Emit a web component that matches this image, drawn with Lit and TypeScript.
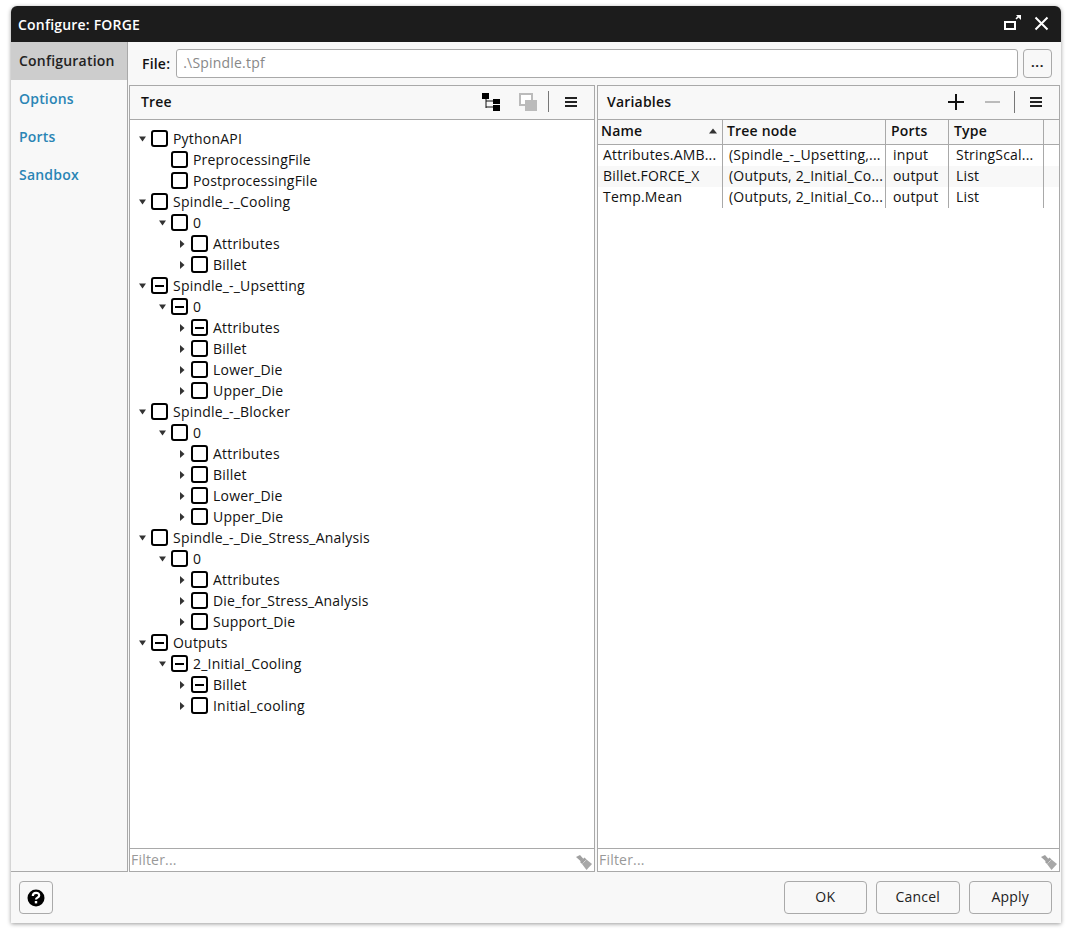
import { LitElement, html, css, svg } from "lit";
import { customElement } from "lit/decorators.js";

type Row = { l: number; t: string; s?: "m"; a?: "d" | "r" };
const rows: Row[] = [
  { l: 0, t: "PythonAPI", a: "d" },
  { l: 1, t: "PreprocessingFile" },
  { l: 1, t: "PostprocessingFile" },
  { l: 0, t: "Spindle_-_Cooling", a: "d" },
  { l: 1, t: "0", a: "d" },
  { l: 2, t: "Attributes", a: "r" },
  { l: 2, t: "Billet", a: "r" },
  { l: 0, t: "Spindle_-_Upsetting", a: "d", s: "m" },
  { l: 1, t: "0", a: "d", s: "m" },
  { l: 2, t: "Attributes", a: "r", s: "m" },
  { l: 2, t: "Billet", a: "r" },
  { l: 2, t: "Lower_Die", a: "r" },
  { l: 2, t: "Upper_Die", a: "r" },
  { l: 0, t: "Spindle_-_Blocker", a: "d" },
  { l: 1, t: "0", a: "d" },
  { l: 2, t: "Attributes", a: "r" },
  { l: 2, t: "Billet", a: "r" },
  { l: 2, t: "Lower_Die", a: "r" },
  { l: 2, t: "Upper_Die", a: "r" },
  { l: 0, t: "Spindle_-_Die_Stress_Analysis", a: "d" },
  { l: 1, t: "0", a: "d" },
  { l: 2, t: "Attributes", a: "r" },
  { l: 2, t: "Die_for_Stress_Analysis", a: "r" },
  { l: 2, t: "Support_Die", a: "r" },
  { l: 0, t: "Outputs", a: "d", s: "m" },
  { l: 1, t: "2_Initial_Cooling", a: "d", s: "m" },
  { l: 2, t: "Billet", a: "r", s: "m" },
  { l: 2, t: "Initial_cooling", a: "r" },
];
const vars = [
  ["Attributes.AMB...", "(Spindle_-_Upsetting,...", "input", "StringScal..."],
  ["Billet.FORCE_X", "(Outputs, 2_Initial_Co...", "output", "List"],
  ["Temp.Mean", "(Outputs, 2_Initial_Co...", "output", "List"],
];

const brush = svg`<svg class="brush" width="18" height="17" viewBox="0 0 18 17"><path d="M1 3 L5 1 L8.5 5 L6 7.5 Z" fill="#a0a0a0"/><path d="M5 8 L9.5 3.5 L11.5 5.5 L7 10 Z" fill="#a0a0a0"/><path d="M7 10 L11.5 5.5 L17 10 L11.5 16 Z" fill="#a8a8a8"/><path d="M8.5 8.5 L10.5 6.5" stroke="#ddd" stroke-width=".8"/></svg>`;

@customElement("app-root")
export class AppRoot extends LitElement {
  static styles = css`
    :host { display: block; width: 1083px; height: 938px; background: #fff; font-family: "Open Sans", sans-serif; font-size: 14px; letter-spacing: 0.2px; color: #111; padding: 6px 0 0 11px; box-sizing: border-box; }
    * { box-sizing: border-box; }
    .dialog { width: 1050px; height: 917px; background: #f8f8f8; border-radius: 6px 6px 0 0; box-shadow: 0 1px 4px rgba(0,0,0,.4); display: flex; flex-direction: column; overflow: hidden; }
    .title { height: 36px; flex: none; background: #1c1c1c; color: #fff; font-weight: 600; font-size: 14px; display: flex; align-items: center; padding: 0 12px 0 7px; }
    .title span { flex: 1; }
    .title svg { display: block; margin-top: -2px; }
    .title .pop { margin-right: 13px; }
    .body { flex: 1; display: flex; min-height: 0; }
    .side { width: 117px; flex: none; border-right: 1px solid #a9a9a9; border-bottom: 1px solid #a9a9a9; font-weight: 600; color: #2a85b5; }
    .side div { height: 38px; line-height: 37px; padding-left: 8px; }
    .side .on { background: #cdcdcd; color: #222; }
    .main { flex: 1; display: flex; flex-direction: column; min-width: 0; padding-left: 1px; }
    .file { height: 43px; flex: none; display: flex; align-items: center; padding: 0 9px 0 13px; }
    .file b { font-weight: 600; margin-right: 6px; }
    .input { flex: 1; height: 29px; border: 1px solid #a9a9a9; border-radius: 3px; background: #fff; color: #888; padding-left: 6px; line-height: 26px; }
    .dots { width: 29px; height: 29px; margin-left: 5px; border: 1px solid #a9a9a9; border-radius: 4px; font-weight: 700; text-align: center; line-height: 25px; font-size: 13px; letter-spacing: 0.6px; color: #222; }
    .panels { flex: 1; display: flex; gap: 2px; min-height: 0; padding-right: 1px; }
    .panel { border: 1px solid #a9a9a9; display: flex; flex-direction: column; min-width: 0; background: #fff; }
    .left { width: 466px; flex: none; }
    .right { flex: 1; }
    .head { height: 34px; flex: none; background: #f8f8f8; border-bottom: 1px solid #a9a9a9; display: flex; align-items: center; font-weight: 600; padding-left: 11px; }
    .right .head { padding-left: 9px; }
    .head .name { flex: 1; padding-bottom: 2px; }
    .head svg { display: block; }
    .sep { width: 1px; height: 21px; background: #777; margin-top: -2px; }
    .right .sep { height: 22px; }
    .tool { margin-top: -2px; }
    .content { flex: 1; min-height: 0; }
    .filter { height: 23px; flex: none; border-top: 1px solid #a9a9a9; color: #999; padding-left: 1px; display: flex; justify-content: space-between; align-items: center; }
    .filter span { line-height: 19px; margin-top: -2px; }
    .brush { margin-right: 1px; margin-top: 4px; }
    .tree { padding-top: 8px; }
    .row { height: 21px; display: flex; align-items: center; white-space: nowrap; }
    .arrow { width: 14px; height: 10px; flex: none; }
    .box { width: 17px; height: 17px; flex: none; border: 2px solid #000; border-radius: 3px; margin-right: 5px; display: flex; align-items: center; justify-content: center; background: #fff; }
    .box i { display: block; width: 9px; height: 2px; background: #000; }
    .l0 { padding-left: 7px; } .l1 { padding-left: 27px; } .l2 { padding-left: 47px; }
    .l1.leaf { padding-left: 41px; }
    .thead, .tr { display: grid; grid-template-columns: 125px 163px 63px 95px 1fr; }
    .thead { height: 25px; background: #f8f8f8; border-bottom: 1px solid #a9a9a9; font-weight: 600; }
    .thead > div { border-right: 1px solid #a9a9a9; padding: 0 5px 2px 4px; line-height: 22px; display: flex; justify-content: space-between; align-items: center; }
    .thead > div:first-child { padding-left: 3px; }
    .thead > div:nth-child(3), .thead > div:nth-child(4) { padding-left: 5px; }
    .thead > div:last-child { border-right: 0; }
    .tr { height: 21px; line-height: 20px; }
    .tr.alt { background: #f8f8f8; }
    .tr > div { border-right: 1px solid #a9a9a9; padding-left: 6px; white-space: nowrap; overflow: hidden; }
    .tr > div:first-child { padding-left: 5px; }
    .tr > div:nth-child(3), .tr > div:nth-child(4) { padding-left: 7px; }
    .tr > div:last-child { border-right: 0; }
    .foot { height: 51px; flex: none; display: flex; align-items: center; padding: 0 9px 0 8px; gap: 9px; }
    .foot .help { width: 34px; height: 33px; margin-right: auto; border: 1px solid #aaa; border-radius: 4px; display: flex; align-items: center; justify-content: center; }
    .foot .btn { width: 83.5px; height: 33px; border: 1px solid #aaa; border-radius: 4px; text-align: center; line-height: 30px; color: #222; }
    .m-a { margin-right: 19px; } .m-b { margin-right: 11px; }
    .m-c { margin-left: 16px; margin-right: 17px; }
    .m-d { margin-right: 21px; } .m-e { margin-right: 14px; }
    .m-f { margin-left: 15px; margin-right: 17px; }
  `;

  private arrow(a?: "d" | "r") {
    if (a === "d") return html`<svg class="arrow" viewBox="0 0 14 10"><path d="M2 2.5h7l-3.5 5z" fill="#333"/></svg>`;
    if (a === "r") return html`<svg class="arrow" viewBox="0 0 14 10"><path d="M3 1l4.5 4L3 9z" fill="#333"/></svg>`;
    return null;
  }

  render() {
    return html`<div class="dialog">
      <div class="title"><span>Configure: FORGE</span>
        <svg class="pop" width="20" height="20" viewBox="0 0 20 20" fill="none" stroke="#fff"><rect x="4" y="9" width="10" height="7" stroke-width="2"/><path d="M15 6l3-3" stroke-width="1.6"/><path d="M15 2h5v5z" fill="#fff" stroke="none"/></svg>
        <svg width="15" height="15" viewBox="0 0 15 15" stroke="#fff" stroke-width="2" fill="none"><path d="M1.5 1.5l12 12M13.5 1.5l-12 12"/></svg>
      </div>
      <div class="body">
        <div class="side">
          <div class="on">Configuration</div><div>Options</div><div>Ports</div><div>Sandbox</div>
        </div>
        <div class="main">
          <div class="file"><b>File:</b><div class="input">.\\Spindle.tpf</div><div class="dots">...</div></div>
          <div class="panels">
            <div class="panel left">
              <div class="head"><span class="name">Tree</span>
                <svg class="tool m-a" width="18" height="18" viewBox="0 0 18 18"><path d="M4 4v11M4 8h8M4 14h8" stroke="#111" fill="none"/><rect x="0" y="0" width="7" height="6" fill="#000"/><rect x="11" y="6" width="7" height="5" fill="#000"/><rect x="11" y="12" width="7" height="6" fill="#000"/></svg>
                <svg class="tool m-b" width="18" height="18" viewBox="0 0 18 18"><rect x="1" y="1" width="12" height="11" fill="#fff" stroke="#bbb" stroke-width="2"/><rect x="6" y="7" width="12" height="11" fill="#bbb"/></svg>
                <div class="sep"></div>
                <svg class="tool m-c" width="12" height="12" viewBox="0 0 12 12"><path d="M0 2h12M0 6h12M0 10h12" stroke="#222" stroke-width="2"/></svg>
              </div>
              <div class="content tree">
                ${rows.map((r) => html`<div class="row l${r.l} ${r.a ? "" : "leaf"}">
                  ${this.arrow(r.a)}
                  <div class="box">${r.s ? html`<i></i>` : null}</div>${r.t}</div>`)}
              </div>
              <div class="filter"><span>Filter...</span>${brush}</div>
            </div>
            <div class="panel right">
              <div class="head"><span class="name">Variables</span>
                <svg class="tool m-d" width="16" height="16" viewBox="0 0 16 16"><path d="M8 0v16M0 8h16" stroke="#111" stroke-width="2"/></svg>
                <svg class="tool m-e" width="15" height="16" viewBox="0 0 15 16"><path d="M0 8h15" stroke="#bbb" stroke-width="2"/></svg>
                <div class="sep"></div>
                <svg class="tool m-f" width="12" height="12" viewBox="0 0 12 12"><path d="M0 2h12M0 6h12M0 10h12" stroke="#222" stroke-width="2"/></svg>
              </div>
              <div class="content">
                <div class="thead">
                  <div>Name <svg width="8" height="6" viewBox="0 0 8 6"><path d="M0 5.5h8L4 .5z" fill="#333"/></svg></div>
                  <div>Tree node</div><div>Ports</div><div>Type</div><div></div>
                </div>
                ${vars.map((v, i) => html`<div class="tr ${i === 1 ? "alt" : ""}">
                  ${v.map((c) => html`<div>${c}</div>`)}<div></div></div>`)}
              </div>
              <div class="filter"><span>Filter...</span>${brush}</div>
            </div>
          </div>
        </div>
      </div>
      <div class="foot">
        <div class="help"><svg width="18" height="18" viewBox="0 0 18 18"><circle cx="9" cy="9" r="8.5" fill="#000"/><path d="M5.8 7c0-4.2 6.4-4.2 6.4-.5 0 2.2-3.2 2-3.2 4" fill="none" stroke="#fff" stroke-width="2.2"/><rect x="7.8" y="12" width="2.4" height="2.4" fill="#fff"/></svg></div>
        <div class="btn">OK</div><div class="btn">Cancel</div><div class="btn">Apply</div>
      </div>
    </div>`;
  }
}
